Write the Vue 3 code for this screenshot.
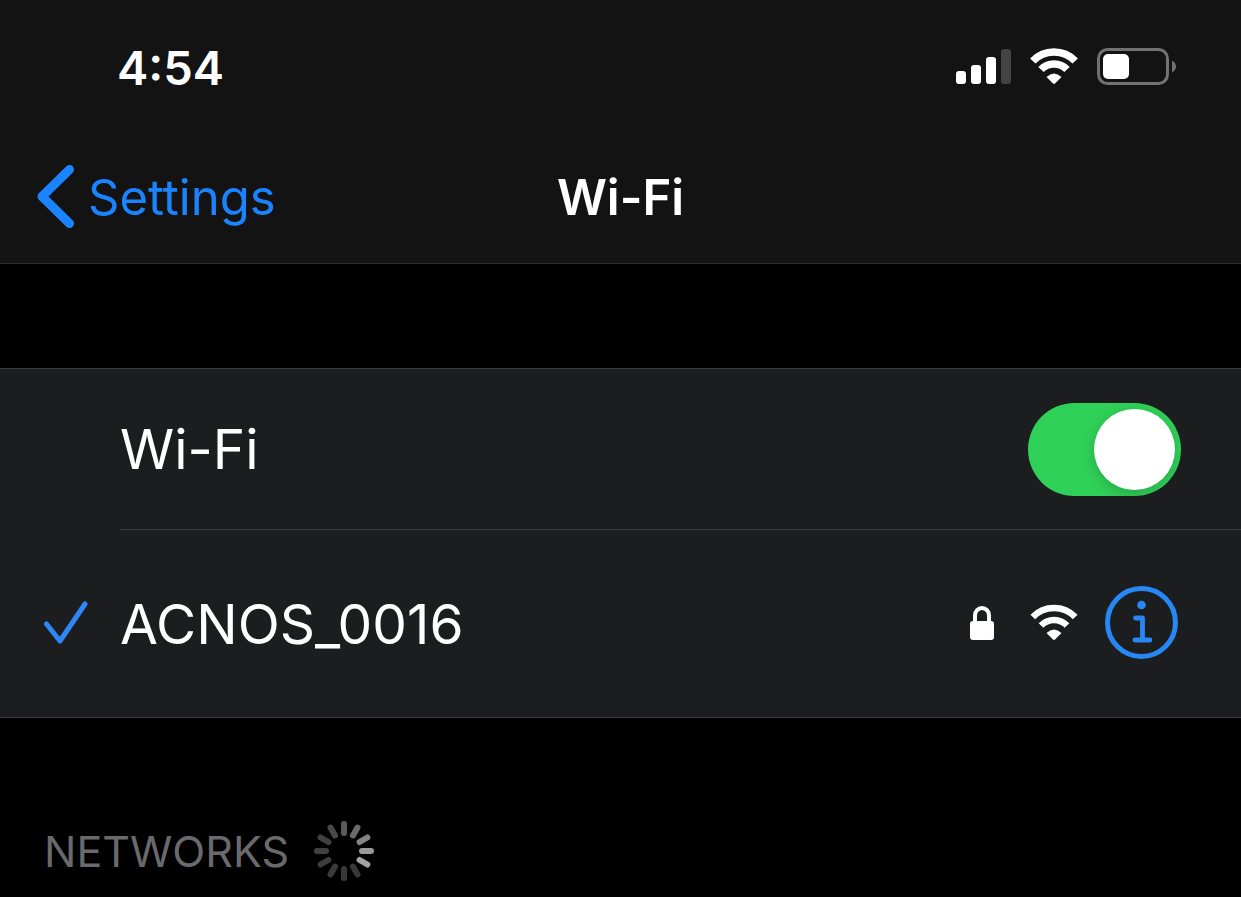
<style>
html,
body {
  background-color: #000;
}
</style>

<style scoped>
.screen {
  font-family: Inter, 'Liberation Sans', sans-serif;
  color: #fff;
  background-color: #000;
}

svg {
  display: block;
  flex-shrink: 0;
}

.top {
  background-color: #131313;
  border-bottom: 1px solid #2c2c2e;
}

.status-bar {
  display: flex;
  align-items: center;
  justify-content: space-between;
  height: 134px;
  padding: 0 64px 0 117px;
}

.time {
  font-size: 47px;
  font-weight: 600;
}

.status-icons {
  display: flex;
  align-items: center;
  gap: 19px;
}

.nav-bar {
  display: grid;
  grid-template-columns: 1fr auto 1fr;
  align-items: center;
  height: 129px;
  padding: 0 36px 3px;
  box-sizing: border-box;
}

.back {
  display: flex;
  align-items: center;
  justify-self: start;
  gap: 12px;
  color: #1a84ff;
  font-size: 49px;
  text-decoration: none;
}

.title {
  margin: 0;
  font-size: 49px;
  font-weight: 600;
}

.group {
  margin: 104px 0 0;
  padding: 0;
  list-style: none;
  background-color: #1c1d1f;
  border-top: 1px solid #3d3d41;
  border-bottom: 1px solid #3d3d41;
}

.row {
  display: flex;
  align-items: center;
  padding-left: 120px;
  font-size: 55px;
}

.row-body {
  display: flex;
  flex: 1;
  align-items: center;
  justify-content: space-between;
  height: 160px;
  padding-right: 60px;
  border-bottom: 1px solid #3d3d41;
}

.row.network {
  padding-left: 0;
}

.network .row-body {
  height: 187px;
  border-bottom: 0;
}

.check {
  width: 120px;
  padding-left: 43px;
  box-sizing: border-box;
}

.switch {
  appearance: none;
  position: relative;
  width: 153px;
  height: 93px;
  margin: 0;
  border-radius: 47px;
  background-color: #3a3a3c;
  overflow: hidden;
  cursor: pointer;
}

.switch::before {
  content: '';
  position: absolute;
  top: 6px;
  left: 6px;
  width: 81px;
  height: 81px;
  border-radius: 50%;
  background-color: #fff;
  box-shadow: 0 4px 14px rgba(0, 0, 0, 0.2);
}

.switch:checked {
  background-color: #30d158;
}

.switch:checked::before {
  left: 66px;
}

.network-icons {
  display: flex;
  align-items: center;
  padding-bottom: 2px;
}

.lock {
  margin-right: 35px;
}

.info {
  margin-left: 27px;
  margin-right: 3px;
  padding: 0;
  border: 0;
  background: none;
  color: #2787f5;
  cursor: pointer;
}

.section-head {
  display: flex;
  align-items: center;
  gap: 24px;
  padding: 102px 44px 16px;
}

.section-head h2 {
  margin: 0;
  color: #6a6a6c;
  font-size: 43px;
  font-weight: 400;
}
</style>

<template>
  <div class="screen">
    <header class="top">
      <div class="status-bar">
        <span class="time">4:54</span>
        <div class="status-icons">
          <svg width="55" height="36" viewBox="0 0 55 36" fill="#fff">
            <rect x="0" y="22" width="10" height="13" rx="3" />
            <rect x="15" y="16" width="10" height="19" rx="3" />
            <rect x="30" y="8" width="10" height="27" rx="3" />
            <rect x="45" y="0" width="10" height="35" rx="3" fill="#434343" />
          </svg>
          <svg width="48" height="38" viewBox="0 0 48 38">
            <path :d="WIFI_ARCS" fill="none" stroke="#fff" stroke-width="7.5" />
            <path :d="WIFI_DOT" fill="#fff" />
          </svg>
          <svg width="80" height="38" viewBox="0 0 80 38">
            <rect x="1.5" y="1.5" width="69" height="34" rx="9" fill="none" stroke="#727272" stroke-width="3" />
            <rect x="6" y="6" width="26" height="25" rx="5" fill="#fff" />
            <path d="M75 12.5 Q79 15 79 18.5 T75 24.5z" fill="#727272" />
          </svg>
        </div>
      </div>
      <nav class="nav-bar">
        <a class="back" href="#">
          <svg width="40" height="64" viewBox="0 0 40 64">
            <path
              d="M33.5 4.5 L6 31.5 L33.5 58.5"
              fill="none"
              stroke="currentColor"
              stroke-width="9"
              stroke-linecap="round"
              stroke-linejoin="round"
            />
          </svg>
          <span>Settings</span>
        </a>
        <h1 class="title">Wi-Fi</h1>
      </nav>
    </header>

    <main>
      <ul class="group">
        <li class="row">
          <div class="row-body">
            <label for="wifi">Wi-Fi</label>
            <input id="wifi" v-model="enabled" class="switch" type="checkbox" role="switch" />
          </div>
        </li>
        <li class="row network">
          <div class="check">
            <svg width="45" height="46" viewBox="0 0 45 46">
              <path
                d="M3.5 23 L17 40 L42 3"
                fill="none"
                stroke="#2f86f6"
                stroke-width="5"
                stroke-linecap="round"
                stroke-linejoin="round"
              />
            </svg>
          </div>
          <div class="row-body">
            <span>{{ network }}</span>
            <div class="network-icons">
              <svg class="lock" width="25" height="35" viewBox="0 0 25 35">
                <rect x="0" y="16" width="24" height="19" rx="3" fill="#fff" />
                <path d="M5 18 V10.5 a7 7.5 0 0 1 14 0 V18" fill="none" stroke="#fff" stroke-width="4" />
              </svg>
              <svg width="48" height="38" viewBox="0 0 48 38">
                <path :d="WIFI_ARCS" fill="none" stroke="#fff" stroke-width="6.5" />
                <path :d="WIFI_DOT" fill="#fff" />
              </svg>
              <button class="info" type="button" aria-label="Network details">
                <svg width="73" height="73" viewBox="0 0 73 73">
                  <circle cx="36.5" cy="36.5" r="34" fill="none" stroke="currentColor" stroke-width="5" />
                  <circle cx="36.5" cy="19" r="4.3" fill="currentColor" />
                  <path
                    d="M30.5 32 H37.5 V54 M30 54 H45"
                    fill="none"
                    stroke="currentColor"
                    stroke-width="4.8"
                    stroke-linecap="round"
                    stroke-linejoin="round"
                  />
                </svg>
              </button>
            </div>
          </div>
        </li>
      </ul>

      <div class="section-head">
        <h2>NETWORKS</h2>
        <svg width="62" height="62" viewBox="-31 -31 62 62">
          <line
            v-for="(color, i) in SPOKES"
            :key="i"
            y1="-27"
            y2="-18"
            :stroke="color"
            stroke-width="6"
            stroke-linecap="round"
            :transform="`rotate(${i * 30})`"
          />
        </svg>
      </div>
    </main>
  </div>
</template>

<script setup>
import { ref } from 'vue';

const WIFI_ARCS = 'M2.8 13 A29.5 29.5 0 0 1 45.2 13 M11 21.500 A18 18 0 0 1 37 21.500';
const WIFI_DOT = 'M16.5 29 Q24 22 31.5 29 L25 35.5 Q24 36.3 23 35.5z';

// clockwise from the top
const SPOKES = [
  '#5a5a5a',
  '#6a6a6a',
  '#858585',
  '#999999',
  '#a3a3a3',
  '#383838',
  '#383838',
  '#3a3a3a',
  '#3c3c3c',
  '#404040',
  '#424242',
  '#4a4a4a',
];

const enabled = ref(true);
const network = ref('ACNOS_0016');
</script>
